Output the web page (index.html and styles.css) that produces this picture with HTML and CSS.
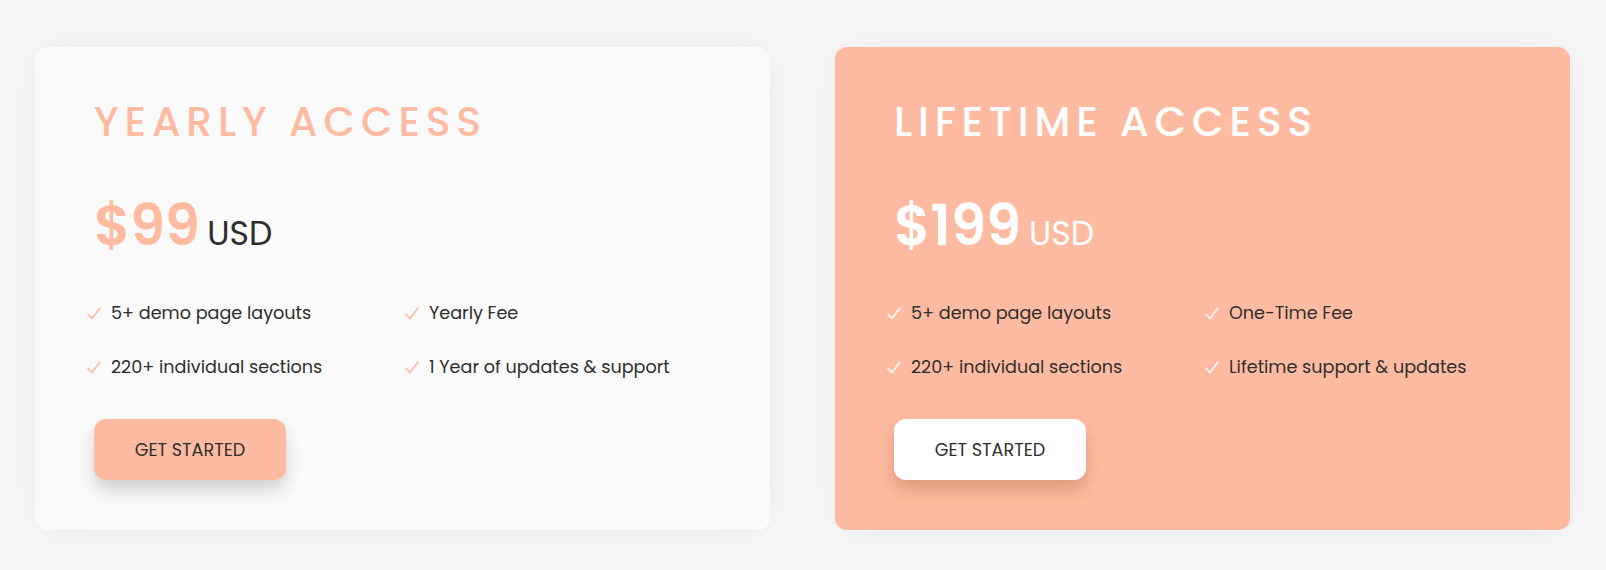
FILE: index.html
```html
<!DOCTYPE html>
<html lang="en">
<head>
<meta charset="utf-8">
<title>Pricing</title>
<link rel="stylesheet" href="styles.css">
</head>
<body>
<main class="pricing">
  <section class="card card-light">
    <h2 class="plan-title">YEARLY ACCESS</h2>
    <div class="price"><span class="amount amount-tight">$99</span><span class="currency">USD</span></div>
    <ul class="features">
      <li><svg class="check" viewBox="0 0 14 13"><polyline points="1,7.5 5,11.5 13,1"/></svg>5+ demo page layouts</li>
      <li><svg class="check" viewBox="0 0 14 13"><polyline points="1,7.5 5,11.5 13,1"/></svg>Yearly Fee</li>
      <li><svg class="check" viewBox="0 0 14 13"><polyline points="1,7.5 5,11.5 13,1"/></svg>220+ individual sections</li>
      <li><svg class="check" viewBox="0 0 14 13"><polyline points="1,7.5 5,11.5 13,1"/></svg>1 Year of updates &amp; support</li>
    </ul>
    <a class="btn btn-peach" href="#">GET STARTED</a>
  </section>
  <section class="card card-peach">
    <h2 class="plan-title">LIFETIME ACCESS</h2>
    <div class="price"><span class="amount">$199</span><span class="currency">USD</span></div>
    <ul class="features">
      <li><svg class="check" viewBox="0 0 14 13"><polyline points="1,7.5 5,11.5 13,1"/></svg>5+ demo page layouts</li>
      <li><svg class="check" viewBox="0 0 14 13"><polyline points="1,7.5 5,11.5 13,1"/></svg>One-Time Fee</li>
      <li><svg class="check" viewBox="0 0 14 13"><polyline points="1,7.5 5,11.5 13,1"/></svg>220+ individual sections</li>
      <li><svg class="check" viewBox="0 0 14 13"><polyline points="1,7.5 5,11.5 13,1"/></svg>Lifetime support &amp; updates</li>
    </ul>
    <a class="btn btn-white" href="#">GET STARTED</a>
  </section>
</main>
</body>
</html>
```
FILE: styles.css
```css
* { box-sizing: border-box; }

body {
  margin: 0;
  background: #f7f7f7;
  font-family: "Poppins", "Open Sans", "DejaVu Sans", sans-serif;
  color: #2e2e2e;
}

.pricing {
  display: flex;
  gap: 65px;
  padding: 47px 36px 40px 35px;
}

.card {
  width: 735px;
  height: 483px;
  border-radius: 12px;
  padding: 50px 58px 0 59px;
  box-shadow: 0 0 45px rgba(0, 0, 0, 0.06);
  display: flex;
  flex-direction: column;
  align-items: flex-start;
}

.card-light { background: #fafafa; }
.card-peach { background: #ffbba1; }

.plan-title {
  margin: 0;
  font-size: 41px;
  line-height: 50px;
  font-weight: 500;
  letter-spacing: 5.8px;
}

.card-light .plan-title { color: #ffbba1; }
.card-peach .plan-title { color: #ffffff; }

.price {
  margin-top: 51px;
  display: flex;
  align-items: baseline;
  gap: 8px;
  line-height: 1;
}

.amount {
  font-size: 56px;
  font-weight: 600;
}

.amount-tight { letter-spacing: -0.5px; }

.currency {
  font-size: 33px;
  font-weight: 400;
}

.card-light .amount { color: #ffbba1; }
.card-light .currency { color: #2e2e2e; }
.card-peach .amount,
.card-peach .currency { color: #ffffff; }

.features {
  list-style: none;
  margin: 47px 0 0 -7px;
  padding: 0;
  display: grid;
  grid-template-columns: 318px 318px;
  row-gap: 30px;
}

.features li {
  display: flex;
  align-items: center;
  gap: 10px;
  font-size: 17.6px;
  line-height: 24px;
  color: #2e2e2e;
}

.check {
  width: 14px;
  height: 13px;
  flex: none;
  fill: none;
  stroke-width: 1.4;
  stroke-linecap: round;
  stroke-linejoin: round;
}

.card-light .check { stroke: #ffb497; }
.card-peach .check { stroke: #ffffff; }

.btn {
  margin-top: 40px;
  width: 192px;
  height: 61px;
  border-radius: 12px;
  display: flex;
  align-items: center;
  justify-content: center;
  font-size: 17.6px;
  text-decoration: none;
  color: #2e2e2e;
}

.btn-peach {
  background: #ffbba1;
  box-shadow: 0 10px 16px rgba(0, 0, 0, 0.16);
}

.btn-white {
  background: #ffffff;
  box-shadow: 0 10px 16px rgba(120, 60, 30, 0.25);
}
```
